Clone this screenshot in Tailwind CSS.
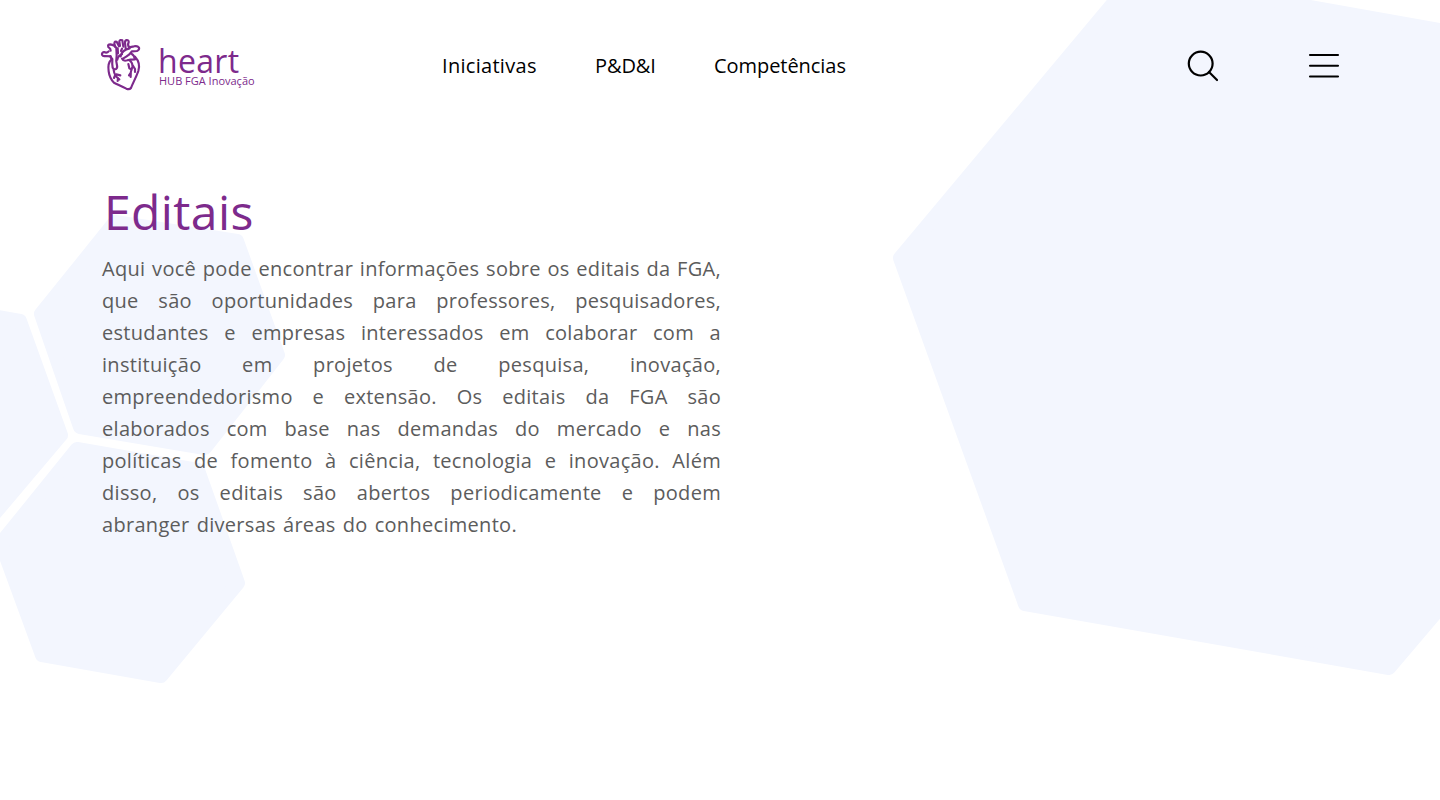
<!DOCTYPE html>
<html lang="pt-BR">
<head>
<meta charset="utf-8">
<title>Editais</title>
<script src="https://cdn.jsdelivr.net/npm/@tailwindcss/browser@4"></script>
</head>
<body class="relative h-[800px] w-[1440px] overflow-hidden bg-white font-['Open_Sans','Noto_Sans',sans-serif]">
<svg class="absolute inset-0 -z-10" width="1440" height="800" fill="#f3f6fe" stroke="#f3f6fe" stroke-width="14" stroke-linejoin="round" aria-hidden="true">
  <path d="M900 258 1025 604 1389 668 1627 388 1501 41 1136 -24Z"/>
  <path d="M41 314 80 427 205 448 278 355 237 241 115 222Z"/>
  <path d="M77 449 198 470 238 583 161 676 42 655 1 543Z"/>
  <path d="M-100 299 20 321 61 435 -15 525 -140 505Z"/>
</svg>
<header class="flex h-[130px] items-start pl-24">
  <a class="flex w-[159px] pt-[34px] text-[#7d2a8c]">
    <svg width="54" height="60" viewBox="0 0 162 180" fill="none" stroke="currentColor" stroke-width="6.5" stroke-linecap="round" stroke-linejoin="round">
      <path d="M44 50C44 43 40 42 37 39Q34 31 43 31Q56 32 61 42L62 64Q59 82 63 94Q65 102 60 105Q54 108 50 101Q48 92 49 75Q43 72 43 66"/>
      <path d="M38 52Q33 58 24 54Q17 56 18 62Q21 68 28 66L44 67L47 75"/>
      <path d="M47 76C37 84 36 98 38 112C40 128 45 137 54 146C66 152 78 157 91 164Q100 168 105 162C110 148 120 131 127 111C133 92 128 80 117 68"/>
      <path d="M64 77Q66 65 78 61M74 67C77 49 90 45 101 43M82 73Q91 68 99 62L108 52L123 51Q131 48 129 41Q124 34 114 37L99 40Q94 32 98 25Q99 18 92 18Q86 20 87 27L89 43"/>
      <path d="M57 37L55 28Q56 21 62 23L69 37M72 36L70 22Q72 16 79 19L82 38M65 43 66 58M78 44 75 51M106 59Q115 64 117 76Q102 76 94 79Q82 83 78 74"/>
      <path d="M101 79Q111 87 109 99Q103 111 104 129M97 90 100 103 107 107M110 94 117 105 117 114M104 117 99 124"/>
      <path d="M53 108Q55 126 70 136M58 122 54 132M61 121 73 124M66 132 65 141"/>
    </svg>
    <span class="ml-2 flex flex-col pt-[9px]">
      <span class="h-[31px] whitespace-nowrap text-[32px] leading-[36px] tracking-[.3px]">heart</span>
      <span class="ml-[1px] whitespace-nowrap text-[11px] leading-[14px]">HUB FGA Inovação</span>
    </span>
  </a>
  <nav class="ml-[187px] flex pt-[50px] text-xl leading-8 text-black">
    <a class="w-[153px] tracking-[.3px]">Iniciativas</a>
    <a class="w-[119px] tracking-[-.1px]">P&amp;D&amp;I</a>
    <a class="tracking-[-.05px]">Competências</a>
  </nav>
  <div class="mr-[100px] ml-auto flex gap-[90px] pt-[50px]">
    <svg width="32" height="32" viewBox="0 0 32 32" fill="none" stroke="#000" stroke-width="2.2" stroke-linecap="round"><circle cx="14.7" cy="13.6" r="11.9"/><path d="m23 22 8 8"/></svg>
    <svg width="32" height="32" viewBox="0 0 32 32" fill="none" stroke="#000" stroke-width="2.1" stroke-linecap="round"><path d="M2 5h28M2 15.7h28M2 26.5h28"/></svg>
  </div>
</header>
<main class="ml-[102px] w-[619px] pt-[52px]">
  <h1 class="ml-[2px] text-[48px] leading-[60px] tracking-[.4px] text-[#7d2a8c]">Editais</h1>
  <p class="mt-[11px] text-justify text-xl leading-8 tracking-[.3px] whitespace-nowrap text-[#5c5c5c] [text-align-last:justify] [&>span]:block">
    <span>Aqui você pode encontrar informações sobre os editais da FGA,</span>
    <span>que são oportunidades para professores, pesquisadores,</span>
    <span>estudantes e empresas interessados em colaborar com a</span>
    <span>instituição em projetos de pesquisa, inovação,</span>
    <span>empreendedorismo e extensão. Os editais da FGA são</span>
    <span>elaborados com base nas demandas do mercado e nas</span>
    <span>políticas de fomento à ciência, tecnologia e inovação. Além</span>
    <span>disso, os editais são abertos periodicamente e podem</span>
    <span class="w-[415px]">abranger diversas áreas do conhecimento.</span>
  </p>
</main>
</body>
</html>
